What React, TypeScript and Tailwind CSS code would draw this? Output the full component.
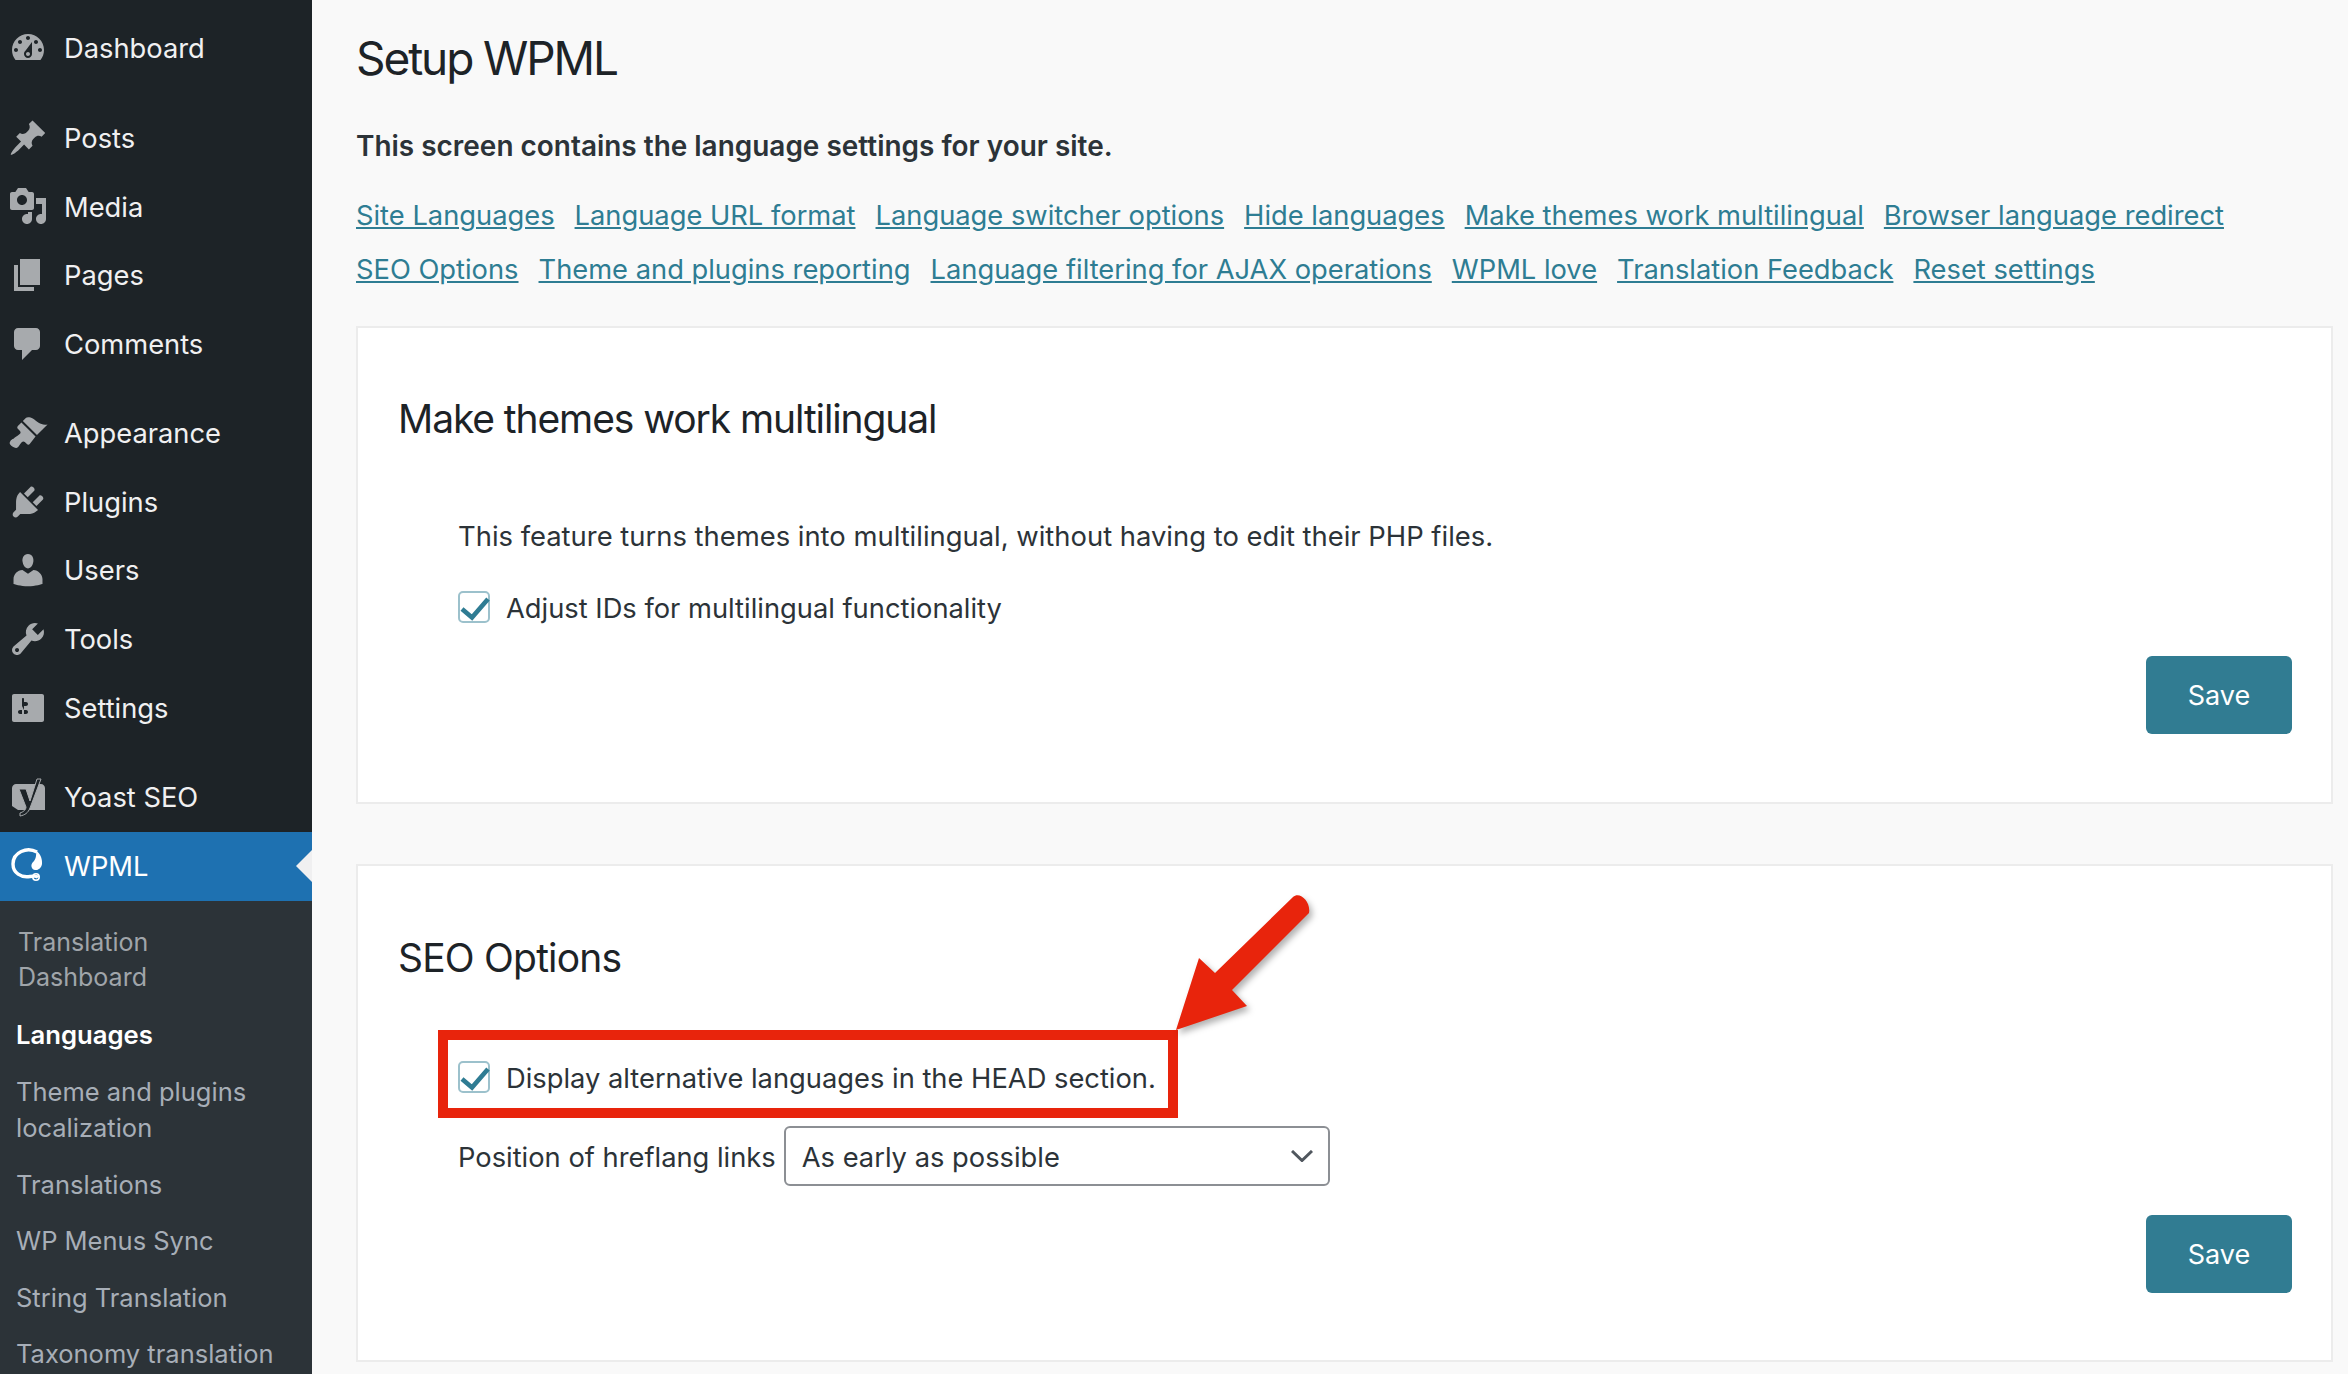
const icons: Record<string, string> = {
  dashboard:
    'M3.76 16h12.48c1.1-1.37 1.76-3.11 1.76-5 0-4.42-3.58-8-8-8s-8 3.58-8 8c0 1.89.66 3.63 1.76 5zM10 4c.55 0 1 .45 1 1s-.45 1-1 1-1-.45-1-1 .45-1 1-1zM6 6c.55 0 1 .45 1 1s-.45 1-1 1-1-.45-1-1 .45-1 1-1zm8 0c.55 0 1 .45 1 1s-.45 1-1 1-1-.45-1-1 .45-1 1-1zm-5.37 5.55L12 7v6c0 1.1-.9 2-2 2s-2-.9-2-2c0-.57.24-1.08.63-1.45zM4 10c.55 0 1 .45 1 1s-.45 1-1 1-1-.45-1-1 .45-1 1-1zm12 0c.55 0 1 .45 1 1s-.45 1-1 1-1-.45-1-1 .45-1 1-1zm-5 3c0-.55-.45-1-1-1s-1 .45-1 1 .45 1 1 1 1-.45 1-1z',
  posts:
    'M10.44 3.02l1.82-1.82 6.36 6.35-1.83 1.82c-1.05-.68-2.48-.57-3.41.36l-.75.75c-.92.93-1.04 2.35-.35 3.41l-1.83 1.82-2.41-2.41-2.8 2.79c-.42.42-3.38 2.71-3.8 2.29s1.86-3.39 2.28-3.81l2.79-2.79L4.1 9.36l1.83-1.82c1.05.69 2.48.57 3.4-.36l.75-.75c.93-.92 1.05-2.35.36-3.41z',
  media:
    'M13 11V4c0-.55-.45-1-1-1h-1.67L9 1H5L3.67 3H2c-.55 0-1 .45-1 1v7c0 .55.45 1 1 1h10c.55 0 1-.45 1-1zM7 4.5c1.38 0 2.5 1.12 2.5 2.5S8.38 9.5 7 9.5 4.5 8.38 4.5 7 5.62 4.5 7 4.5zM14 6h5v10.5c0 1.38-1.12 2.5-2.5 2.5S14 17.88 14 16.5s1.12-2.5 2.5-2.5c.17 0 .34.02.5.05V9h-3V6zm-4 8.05V13h2v3.5c0 1.38-1.12 2.5-2.5 2.5S7 17.88 7 16.5 8.12 14 9.5 14c.17 0 .34.02.5.05z',
  pages: 'M6 15V2h10v13H6zm-1 1h8v2H3V5h2v11z',
  comments:
    'M5 2h9c1.1 0 2 .9 2 2v7c0 1.1-.9 2-2 2h-2l-5 5v-5H5c-1.1 0-2-.9-2-2V4c0-1.1.9-2 2-2z',
  appearance:
    'M14.48 11.06L7.41 3.99l1.5-1.5c.5-.56 2.3-.47 3.51.32 1.21.8 1.43 1.28 2.91 2.1 1.18.64 2.45 1.26 4.45.85zm-.71.71L6.7 4.7 4.93 6.47c-.39.39-.39 1.02 0 1.41l1.06 1.06c.39.39.39 1.03 0 1.42-.6.6-1.43 1.11-2.21 1.69-.35.26-.7.53-1.01.84C1.43 13.23.4 14.75 1.1 15.8c.71 1.04 2.4 2.01 3.38 1.6.31-.14.65-.46.9-.78.5-.67.98-1.51 1.59-2.12.39-.39 1.03-.39 1.42 0l1.06 1.06c.39.39 1.02.39 1.41 0z',
  plugins:
    'M13.11 4.36L9.87 7.6 8 5.73l3.24-3.24c.35-.34 1.05-.2 1.56.32.52.51.66 1.21.31 1.55zm-8 1.77l.91-1.12 9.01 9.01-1.19.84c-.71.71-2.63 1.16-3.82 1.16H6.14L4.9 17.26c-.59.59-1.54.59-2.12 0-.59-.58-.59-1.53 0-2.12l1.24-1.24v-3.88c0-1.13.4-3.19 1.09-3.89zm7.26 3.97l3.24-3.24c.34-.35 1.04-.21 1.55.31.52.51.66 1.21.31 1.55l-3.24 3.25z',
  users:
    'M10 9.25c-2.27 0-2.73-3.44-2.73-3.44C7 4.02 7.82 2 9.97 2c2.16 0 2.98 2.02 2.71 3.81 0 0-.41 3.44-2.68 3.44zm0 2.57L12.72 10c2.39 0 4.52 2.33 4.52 4.53v2.49s-3.65 1.13-7.24 1.13c-3.65 0-7.24-1.13-7.24-1.13v-2.49c0-2.25 1.94-4.48 4.47-4.48z',
  tools:
    'M16.68 9.77c-1.34 1.34-3.3 1.67-4.95.99l-5.41 6.52c-.99.99-2.59.99-3.58 0s-.99-2.59 0-3.57l6.52-5.42c-.68-1.65-.35-3.61.99-4.95 1.28-1.28 3.12-1.62 4.72-1.06l-2.89 2.89 2.82 2.82 2.86-2.87c.53 1.58.18 3.39-1.08 4.65zM3.81 16.21c.4.39 1.04.39 1.43 0 .4-.4.4-1.04 0-1.43-.39-.4-1.03-.4-1.43 0-.39.39-.39 1.03 0 1.43z',
  settings:
    'M18 16V4c0-.55-.45-1-1-1H3c-.55 0-1 .45-1 1v12c0 .55.45 1 1 1h14c.55 0 1-.45 1-1zM8 11h1c.55 0 1 .45 1 1s-.45 1-1 1H8v1.5c0 .28-.22.5-.5.5s-.5-.22-.5-.5V13H6c-.55 0-1-.45-1-1s.45-1 1-1h1V5.5c0-.28.22-.5.5-.5s.5.22.5.5V7h1c.55 0 1 .45 1 1s-.45 1-1 1h-1v5.5c0 .28-.22.5-.5.5s-.5-.22-.5-.5V9z',
};

function MenuIcon({ name }: { name: string }) {
  return (
    <svg viewBox="0 0 20 20" className="w-10 h-10 shrink-0 fill-[#a7aaad]">
      <path d={icons[name]} />
    </svg>
  );
}

function YoastIcon() {
  return (
    <svg viewBox="0 0 40 44" className="w-10 h-11 shrink-0">
      <path d="M8 9h25c2 0 4 2 4 4v22H10l-6-4V13c0-2 2-4 4-4z" fill="#a7aaad" />
      <path
        d="M11 14h7l4 12 7-22h4L22 33c-2 5-5 7-10 8v-3c3-1 6-3 6-6L11 14z"
        fill="#1d2327"
        stroke="#a7aaad"
        strokeWidth="1"
      />
    </svg>
  );
}

function WpmlIcon() {
  return (
    <svg viewBox="0 0 40 40" className="w-10 h-10 shrink-0" fill="none">
      <path d="M29 6C19 .5 5 6 5 18c0 9 8 14 17 12.5 3-.5 7-.5 8 1" stroke="#fff" strokeWidth="3.4" />
      <path d="M28 4.5C33 8 34.5 14 34 18c-.5 4-4 6.500-7 6-3-.5-4.500-4-3-6.500 1.500-2.500 5-4 4-13z" fill="#fff" />
      <circle cx="28" cy="31" r="3.2" stroke="#fff" strokeWidth="1.6" />
    </svg>
  );
}

function MenuItem({ name, label }: { name: string; label: string }) {
  return (
    <div className="flex items-center shrink-0 h-[68.6px] pl-2 gap-4 text-[27.3px] text-[#f0f0f1]">
      <MenuIcon name={name} />
      <span className="pt-[3px]">{label}</span>
    </div>
  );
}

function CheckBox() {
  return (
    <span className="w-8 h-8 shrink-0 rounded-[5px] border-2 border-[#9cc1cc] bg-white">
      <svg viewBox="0 0 28 28" className="w-7 h-7 overflow-visible fill-none stroke-[#2f7c93] stroke-[4.6]">
        <path d="M2 16l10 8.500L28 6" />
      </svg>
    </span>
  );
}

function SaveButton() {
  return (
    <div className="flex justify-end">
      <button className="w-[146px] h-[78px] pt-[2px] rounded-md bg-[#317c92] text-white text-[27px]">Save</button>
    </div>
  );
}

const linkRows = [
  ['Site Languages', 'Language URL format', 'Language switcher options', 'Hide languages', 'Make themes work multilingual', 'Browser language redirect'],
  ['SEO Options', 'Theme and plugins reporting', 'Language filtering for AJAX operations', 'WPML love', 'Translation Feedback', 'Reset settings'],
];

const subItems = [
  { label: 'Languages', cls: 'text-white font-semibold h-[57px] text-[25.7px]' },
  { label: 'Theme and plugins localization', cls: 'text-[#a7aeb7] h-[93px] leading-9' },
  { label: 'Translations', cls: 'text-[#a7aeb7] h-[56.5px]' },
  { label: 'WP Menus Sync', cls: 'text-[#a7aeb7] h-[56.5px]' },
  { label: 'String Translation', cls: 'text-[#a7aeb7] h-[56.5px]' },
  { label: 'Taxonomy translation', cls: 'text-[#a7aeb7] h-[56.5px]' },
];

export default function App() {
  return (
    <div className="flex w-[2348px] h-[1374px] overflow-hidden bg-[#f9f9f9] font-['Inter',sans-serif] text-[#23282d]">
      {/* Sidebar */}
      <aside className="w-[312px] shrink-0 bg-[#1d2327] flex flex-col">
        <div className="shrink-0 pt-[14px] pb-[21px]">
          <MenuItem name="dashboard" label="Dashboard" />
        </div>
        <MenuItem name="posts" label="Posts" />
        <MenuItem name="media" label="Media" />
        <MenuItem name="pages" label="Pages" />
        <MenuItem name="comments" label="Comments" />
        <div className="h-[21px] shrink-0" />
        <MenuItem name="appearance" label="Appearance" />
        <MenuItem name="plugins" label="Plugins" />
        <MenuItem name="users" label="Users" />
        <MenuItem name="tools" label="Tools" />
        <MenuItem name="settings" label="Settings" />
        <div className="h-[21px] shrink-0" />
        <div className="flex items-center shrink-0 h-[69px] pl-2 gap-4 text-[27.3px] text-[#f0f0f1]">
          <YoastIcon />
          <span className="pt-[3px]">Yoast SEO</span>
        </div>
        <div className="relative flex items-center shrink-0 h-[69px] pl-2 gap-4 text-[27.3px] text-white bg-[#1e71b1]">
          <WpmlIcon />
          <span className="pt-[3px]">WPML</span>
          <span className="absolute right-0 top-[18px] border-y-[16px] border-r-[16px] border-y-transparent border-r-[#f0f0f1]" />
        </div>
        <div className="flex-1 bg-[#2c3338] pl-4 pr-4 pt-[24px] text-[25.5px] leading-[35px]">
          <div className="h-[92px] pl-[2px] text-[25px] text-[#a0a5aa] w-[180px]">Translation Dashboard</div>
          {subItems.map((item) => (
            <div key={item.label} className={item.cls}>
              {item.label}
            </div>
          ))}
        </div>
      </aside>

      {/* Main */}
      <main className="flex-1 pl-[44px] pr-[15px] min-w-0">
        <h1 className="mt-7 text-[46px] tracking-[-2.1px] leading-[60px] text-[#1d2327]">Setup WPML</h1>
        <p className="mt-[38px] mb-[-1px] text-[27.95px] leading-10 font-semibold text-[#2c3338]">
          This screen contains the language settings for your site.
        </p>
        <div className="mt-[23px] mb-[30px]">
          {linkRows.map((row) => (
            <div key={row[0]} className="flex gap-5 h-[54px] pt-[2px] items-center text-[27.3px] text-[#2e7d93]">
              {row.map((link) => (
                <a key={link} href="#" className="underline">
                  {link}
                </a>
              ))}
            </div>
          ))}
        </div>

        <section className="bg-white border-2 border-[#ececec] pl-10 pr-[39px] pt-[66px] pb-[68px]">
          <h2 className="text-[39px] tracking-[-1.1px] leading-[50px] text-[#1d2327]">Make themes work multilingual</h2>
          <div className="pl-[60px] text-[27.3px] leading-10 text-[#2c3338]">
            <p className="mt-[72px] mb-[-1px] text-[27.4px]">This feature turns themes into multilingual, without having to edit their PHP files.</p>
            <label className="mt-8 flex items-center gap-4">
              <CheckBox />
              <span className="h-10 pt-[2px]">Adjust IDs for multilingual functionality</span>
            </label>
          </div>
          <div className="mt-[29px]">
            <SaveButton />
          </div>
        </section>

        <section className="mt-[60px] bg-white border-2 border-[#ececec] pl-10 pr-[39px] pt-[67px] pb-[67px]">
          <h2 className="text-[39px] tracking-[-0.8px] leading-[50px] text-[#1d2327]">SEO Options</h2>
          <div className="pl-[60px] text-[27.3px] leading-10 text-[#2c3338]">
            <div className="relative mt-[74px]">
              <label className="flex items-center gap-4">
                <CheckBox />
                <span className="h-10 pt-[2px]">Display alternative languages in the HEAD section.</span>
              </label>
              {/* Red annotation over the row */}
              <div className="absolute -left-5 -top-[27px] w-[740px] h-[88px] border-[10px] border-[#e8240c]" />
              <svg viewBox="0 0 150 150" className="absolute left-[712px] -top-[167px] w-[150px] h-[150px] overflow-visible drop-shadow-[3px_4px_3px_rgba(0,0,0,0.3)]">
                <path d="M6 140L29 68L45 83L123 7C130 1 141 12 139 23L62 100L77 116Z" fill="#e8240c" />
              </svg>
            </div>
            <div className="mt-[29px] flex items-center gap-2">
              <span className="h-10 pt-[2px]">Position of hreflang links</span>
              <div className="w-[546px] h-[60px] rounded-md border-2 border-[#8c8f94] bg-white flex items-center justify-between pl-4 pr-[15px]">
                <span className="h-10 pt-[2px]">As early as possible</span>
                <svg viewBox="0 0 22 12" className="w-[22px] h-3 fill-none stroke-[#50575e] stroke-[3]">
                  <path d="M1 1l10 9.500L21 1" />
                </svg>
              </div>
            </div>
          </div>
          <div className="mt-[29px]">
            <SaveButton />
          </div>
        </section>
      </main>
    </div>
  );
}
